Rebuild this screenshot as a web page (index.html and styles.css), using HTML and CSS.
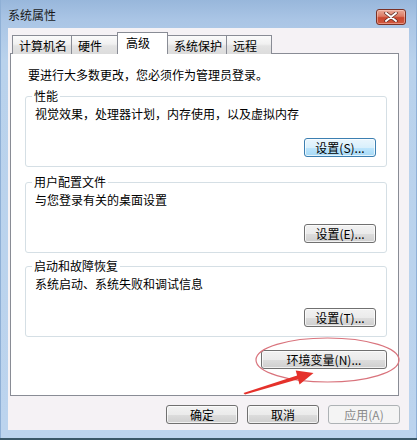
FILE: index.html
```html
<!DOCTYPE html>
<html lang="zh-CN">
<head>
<meta charset="utf-8">
<title>系统属性</title>
<link rel="stylesheet" href="styles.css">
</head>
<body>
<div class="window">
  <div class="titlebar">
    <span class="title">系统属性</span>
    <div class="close">
      <svg width="14" height="10" viewBox="0 0 14 10">
        <path d="M2 1 L12 9 M12 1 L2 9" stroke="#5a2a22" stroke-width="3.4" stroke-linecap="round"/>
        <path d="M2 1 L12 9 M12 1 L2 9" stroke="#ffffff" stroke-width="2" stroke-linecap="round"/>
      </svg>
    </div>
  </div>
  <div class="client">
    <div class="tabs">
      <div class="tab tab-w4">计算机名</div>
      <div class="tab tab-w2">硬件</div>
      <div class="tab tab-active">高级</div>
      <div class="tab tab-w4">系统保护</div>
      <div class="tab tab-w2b">远程</div>
    </div>
    <div class="panel">
      <p class="intro">要进行大多数更改，您必须作为管理员登录。</p>
      <fieldset class="group">
        <legend>性能</legend>
        <p class="desc">视觉效果，处理器计划，内存使用，以及虚拟内存</p>
        <div class="row"><button class="btn btn-focus">设置(S)...</button></div>
      </fieldset>
      <fieldset class="group group-2">
        <legend>用户配置文件</legend>
        <p class="desc">与您登录有关的桌面设置</p>
        <div class="row"><button class="btn">设置(E)...</button></div>
      </fieldset>
      <fieldset class="group group-3">
        <legend>启动和故障恢复</legend>
        <p class="desc">系统启动、系统失败和调试信息</p>
        <div class="row"><button class="btn">设置(T)...</button></div>
      </fieldset>
      <div class="env-row"><button class="btn btn-env">环境变量(N)...</button></div>
    </div>
    <div class="footer">
      <button class="btn">确定</button>
      <button class="btn">取消</button>
      <button class="btn btn-disabled">应用(A)</button>
    </div>
  </div>
  <svg class="annot" width="417" height="440" viewBox="0 0 417 440">
    <ellipse cx="327.5" cy="360" rx="71.5" ry="22" fill="none" stroke="#d9737c" stroke-width="1.2"/>
    <polygon points="243.5,393 297.1,375.4 295.7,370.6 313.5,373 299.5,384.5 298.1,379.2 245,394.5" fill="#e5312b"/>
  </svg>
</div>
</body>
</html>
```
FILE: styles.css
```css
* { box-sizing: border-box; }

html, body {
  margin: 0;
  padding: 0;
}

body {
  width: 417px;
  height: 440px;
  overflow: hidden;
  font-family: "Noto Sans CJK SC", "Noto Sans", sans-serif;
  font-size: 12px;
  color: #000;
}

.window {
  position: relative;
  width: 417px;
  height: 440px;
  display: flex;
  flex-direction: column;
  padding: 0 8px 8px 8px;
  background: linear-gradient(to bottom, #98b7db 0px, #aac5e5 20px, #b9d2ec 60px, #bcd4ee 100%);
  border-bottom: 2px solid #3a5869;
  box-shadow: inset 1px 0 0 #8fb0d6, inset -1px 0 0 #8fb0d6;
}

.titlebar {
  height: 28px;
  flex: none;
  display: flex;
  align-items: center;
  justify-content: space-between;
}

.title {
  font-size: 12px;
  line-height: 16px;
  color: #1a1a1a;
  padding-top: 2px;
  padding-left: 0;
}

.close {
  width: 30px;
  height: 16px;
  margin-right: 3px;
  margin-top: 5px;
  border: 1px solid #7b3225;
  border-radius: 3px;
  background: linear-gradient(to bottom, #e9ab9a 0%, #dc7b64 45%, #c9472f 55%, #d0593f 100%);
  box-shadow: inset 0 0 0 1px rgba(255, 220, 210, 0.45);
  display: flex;
  align-items: center;
  justify-content: center;
}

.client {
  flex: 1;
  display: flex;
  flex-direction: column;
  background: #f5f2f5;
  padding: 4px 10px 6px 2px;
}

.tabs {
  display: flex;
  height: 22px;
  padding-left: 2px;
  position: relative;
  z-index: 2;
}

.tab {
  height: 19px;
  margin-top: 3px;
  border: 1px solid #898c95;
  border-bottom: none;
  background: linear-gradient(to bottom, #fbfbfb 0%, #f0f0f0 45%, #e3e3e3 55%, #dcdcdc 100%);
  padding: 1px 0 0 6px;
  line-height: 18px;
  white-space: nowrap;
}

.tab + .tab { margin-left: -1px; }

.tab-w4 { width: 60px; }
.tab-w2 { width: 47px; }
.tab-w2b { width: 46px; }

.tab-active {
  width: 51px;
  height: 22px;
  margin-top: 0;
  background: #ffffff;
  padding: 1px 0 0 8px;
  line-height: 18px;
}

.panel {
  flex: 1;
  margin-top: -1px;
  border: 1px solid #898c95;
  background: #ffffff;
  padding: 13px 11px 0 14px;
  display: flex;
  flex-direction: column;
}

.intro {
  margin: 0 0 0 3px;
  line-height: 16px;
}

.group {
  margin: 5px 0 0 0;
  border: 1px solid #d5dfe5;
  border-radius: 3px;
  padding: 2px 10px 9px 9px;
  min-width: 0;
}

.group-2 { margin-top: 7px; }
.group-3 { margin-top: 5px; }

.group legend {
  padding: 0 2px;
  margin-left: -3px;
  line-height: 16px;
  color: #000;
}

.desc {
  margin: 0;
  line-height: 16px;
}

.row {
  display: flex;
  justify-content: flex-end;
  margin-top: 16px;
}

.btn {
  font-family: "Noto Sans CJK SC", "Noto Sans", sans-serif;
  font-size: 12px;
  color: #000;
  width: 72px;
  height: 19px;
  padding: 0;
  line-height: 17px;
  border: 1px solid #707070;
  border-radius: 3px;
  background: linear-gradient(to bottom, #f2f2f2 0%, #ebebeb 50%, #dddddd 51%, #cfcfcf 100%);
  box-shadow: inset 0 0 0 1px rgba(255, 255, 255, 0.7);
  white-space: nowrap;
}

.btn-focus {
  border-color: #3c7fb1;
  background: linear-gradient(to bottom, #eaf6fd 0%, #d9f0fc 50%, #bee6fd 51%, #a7d9f5 100%);
}

.env-row {
  display: flex;
  justify-content: flex-end;
  margin-top: 13px;
}

.btn-env {
  width: 126px;
}

.btn-disabled {
  color: #8a8a8a;
  border-color: #adb2b5;
  background: #f4f4f4;
  box-shadow: none;
}

.footer {
  display: flex;
  justify-content: flex-end;
  gap: 9px;
  margin-top: 9px;
  margin-right: -1px;
}

.annot {
  position: absolute;
  left: 0;
  top: 0;
  pointer-events: none;
}
```
